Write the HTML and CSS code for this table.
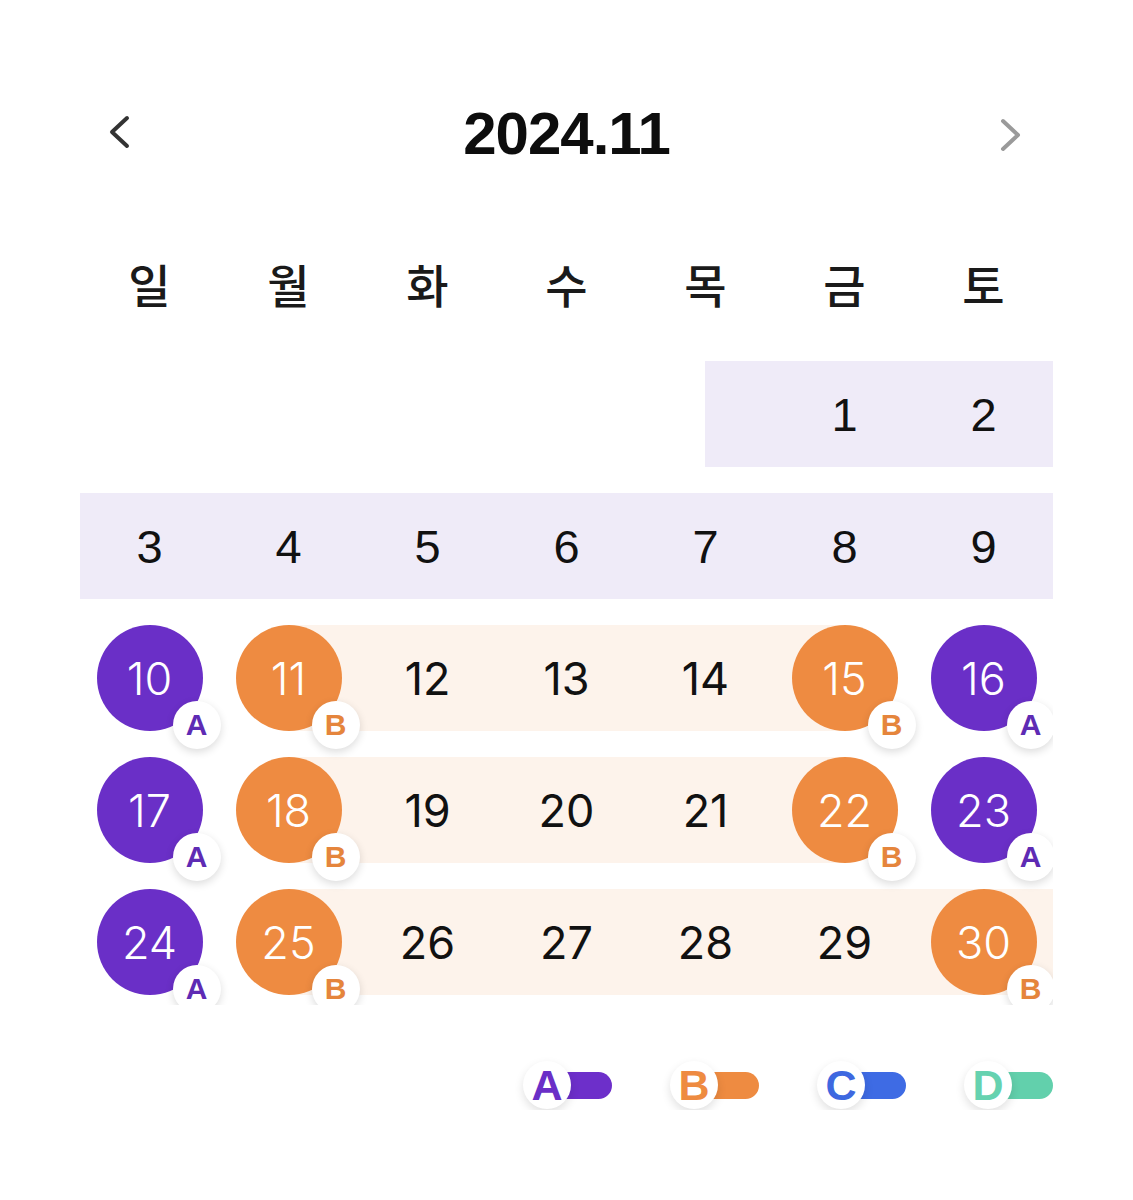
FILE: index.html
```html
<!DOCTYPE html>
<html>
<head>
  <meta charset="UTF-8">
  <title>2024.11 Calendar</title>
  <link rel="stylesheet" href="styles.css">
</head>
<body>
  <div class="calendar">
    <!-- Month header -->
    <div class="header">
      <button class="nav prev" aria-label="이전 달">
        <svg width="26" height="36" viewBox="0 0 26 36"><polyline points="21,4 6,18 21,32" /></svg>
      </button>
      <h1 class="title">2024.11</h1>
      <button class="nav next" aria-label="다음 달">
        <svg width="26" height="36" viewBox="0 0 26 36"><polyline points="5,4 20,18 5,32" /></svg>
      </button>
    </div>

    <div class="weekdays">
      <span>일</span><span>월</span><span>화</span><span>수</span><span>목</span><span>금</span><span>토</span>
    </div>

    <!-- Weeks -->
    <div class="weeks">
      <div class="week plain band-tail">
        <div class="day"></div>
        <div class="day"></div>
        <div class="day"></div>
        <div class="day"></div>
        <div class="day"></div>
        <div class="day">1</div>
        <div class="day">2</div>
      </div>
      <div class="week plain band-full">
        <div class="day">3</div>
        <div class="day">4</div>
        <div class="day">5</div>
        <div class="day">6</div>
        <div class="day">7</div>
        <div class="day">8</div>
        <div class="day">9</div>
      </div>
      <div class="week shift band-mid">
        <div class="day"><span class="dot a">10<i class="badge">A</i></span></div>
        <div class="day"><span class="dot b">11<i class="badge">B</i></span></div>
        <div class="day">12</div>
        <div class="day">13</div>
        <div class="day">14</div>
        <div class="day"><span class="dot b">15<i class="badge">B</i></span></div>
        <div class="day"><span class="dot a">16<i class="badge">A</i></span></div>
      </div>
      <div class="week shift band-mid">
        <div class="day"><span class="dot a">17<i class="badge">A</i></span></div>
        <div class="day"><span class="dot b">18<i class="badge">B</i></span></div>
        <div class="day">19</div>
        <div class="day">20</div>
        <div class="day">21</div>
        <div class="day"><span class="dot b">22<i class="badge">B</i></span></div>
        <div class="day"><span class="dot a">23<i class="badge">A</i></span></div>
      </div>
      <div class="week shift band-end">
        <div class="day"><span class="dot a">24<i class="badge">A</i></span></div>
        <div class="day"><span class="dot b">25<i class="badge">B</i></span></div>
        <div class="day">26</div>
        <div class="day">27</div>
        <div class="day">28</div>
        <div class="day">29</div>
        <div class="day"><span class="dot b">30<i class="badge">B</i></span></div>
      </div>
    </div>

    <!-- Shift legend -->
    <div class="legend">
      <div class="legendItem a"><span class="mark">A</span><span class="pill"></span></div>
      <div class="legendItem b"><span class="mark">B</span><span class="pill"></span></div>
      <div class="legendItem c"><span class="mark">C</span><span class="pill"></span></div>
      <div class="legendItem d"><span class="mark">D</span><span class="pill"></span></div>
    </div>
  </div>
</body>
</html>
```

FILE: styles.css
```css
body {
  margin: 0;
  background: #fff;
  color: #111;
  font-family: "Liberation Sans", Arial, sans-serif;
}
.calendar {
  width: 973px;
  margin-left: 80px;
  padding-top: 98px;
}
/* Header */
.header {
  display: grid;
  grid-template-columns: 1fr auto 1fr;
  align-items: center;
  height: 70px;
}
.title {
  margin: 0;
  font-size: 60px;
  font-weight: bold;
  letter-spacing: -1px;
  color: #0d0d0d;
}
.nav {
  border: 0;
  background: none;
  padding: 0;
  display: flex;
}
.nav svg polyline {
  fill: none;
  stroke-width: 4;
  stroke-linecap: round;
  stroke-linejoin: round;
}
.prev {
  justify-self: start;
  margin-left: 26px;
  margin-top: -2px;
}
.prev polyline { stroke: #333; }
.next {
  justify-self: end;
  margin-right: 29px;
  margin-top: 4px;
}
.next polyline { stroke: #9a9a9a; }
/* Weekday labels */
.weekdays {
  display: grid;
  grid-template-columns: repeat(7, 1fr);
  height: 60px;
  margin-top: 82px;
  align-items: center;
  text-align: center;
  font-family: "Noto Sans CJK KR", sans-serif;
  font-size: 46px;
  font-weight: 500;
  color: #1a1a1a;
}
/* Weeks */
.weeks {
  display: flex;
  flex-direction: column;
  gap: 26px;
  margin-top: 51px;
  padding-bottom: 10px;
  overflow: hidden;
}
.week {
  display: grid;
  grid-template-columns: repeat(7, 1fr);
  height: 106px;
}
.day {
  display: flex;
  align-items: center;
  justify-content: center;
  font-size: 46px;
}
.plain .day {
  font-family: "Liberation Sans", Arial, sans-serif;
  font-size: 47px;
}
.shift .day {
  font-family: Inter, "Liberation Sans", sans-serif;
  font-size: 45px;
}
.band-tail { background: linear-gradient(90deg, transparent 64.28%, #efebf8 64.28%); }
.band-full { background: #efebf8; }
.band-mid { background: linear-gradient(90deg, transparent 21.43%, #fdf3eb 21.43% 78.57%, transparent 78.57%); }
.band-end { background: linear-gradient(90deg, transparent 21.43%, #fdf3eb 21.43%); }
.dot {
  position: relative;
  width: 106px;
  height: 106px;
  border-radius: 50%;
  display: flex;
  align-items: center;
  justify-content: center;
  color: #fff;
  font-weight: 300;
}
.dot.a { background: #6a2fc7; }
.dot.b { background: #ee8b41; }
.badge {
  position: absolute;
  left: 76px;
  top: 76px;
  width: 48px;
  height: 48px;
  border-radius: 50%;
  background: #fff;
  box-shadow: 0 3px 9px rgba(0, 0, 0, 0.14);
  display: flex;
  align-items: center;
  justify-content: center;
  font-style: normal;
  font-family: "Liberation Sans", Arial, sans-serif;
  font-weight: bold;
  font-size: 30px;
}
.dot.a .badge { color: #5e2bb4; }
.dot.b .badge { color: #e5853c; }
/* Legend */
.legend {
  display: flex;
  justify-content: flex-end;
  gap: 58px;
  margin-top: 55px;
}
.legendItem {
  display: flex;
  align-items: center;
  height: 50px;
}
.mark {
  position: relative;
  z-index: 1;
  width: 48px;
  height: 48px;
  border-radius: 50%;
  background: #fff;
  box-shadow: 0 4px 10px rgba(0, 0, 0, 0.12);
  display: flex;
  align-items: center;
  justify-content: center;
  font-weight: bold;
  font-size: 43px;
}
.pill {
  width: 65px;
  height: 27px;
  margin-left: -24px;
  border-radius: 0 14px 14px 0;
}
.legendItem.a .mark { color: #6a2fc7; }
.legendItem.a .pill { background: #6d2fca; }
.legendItem.b .mark { color: #ee8b41; }
.legendItem.b .pill { background: #ee8b41; }
.legendItem.c .mark { color: #3e68e0; }
.legendItem.c .pill { background: #3e6be4; }
.legendItem.d .mark { color: #66d2b0; }
.legendItem.d .pill { background: #62d0ac; }
```
